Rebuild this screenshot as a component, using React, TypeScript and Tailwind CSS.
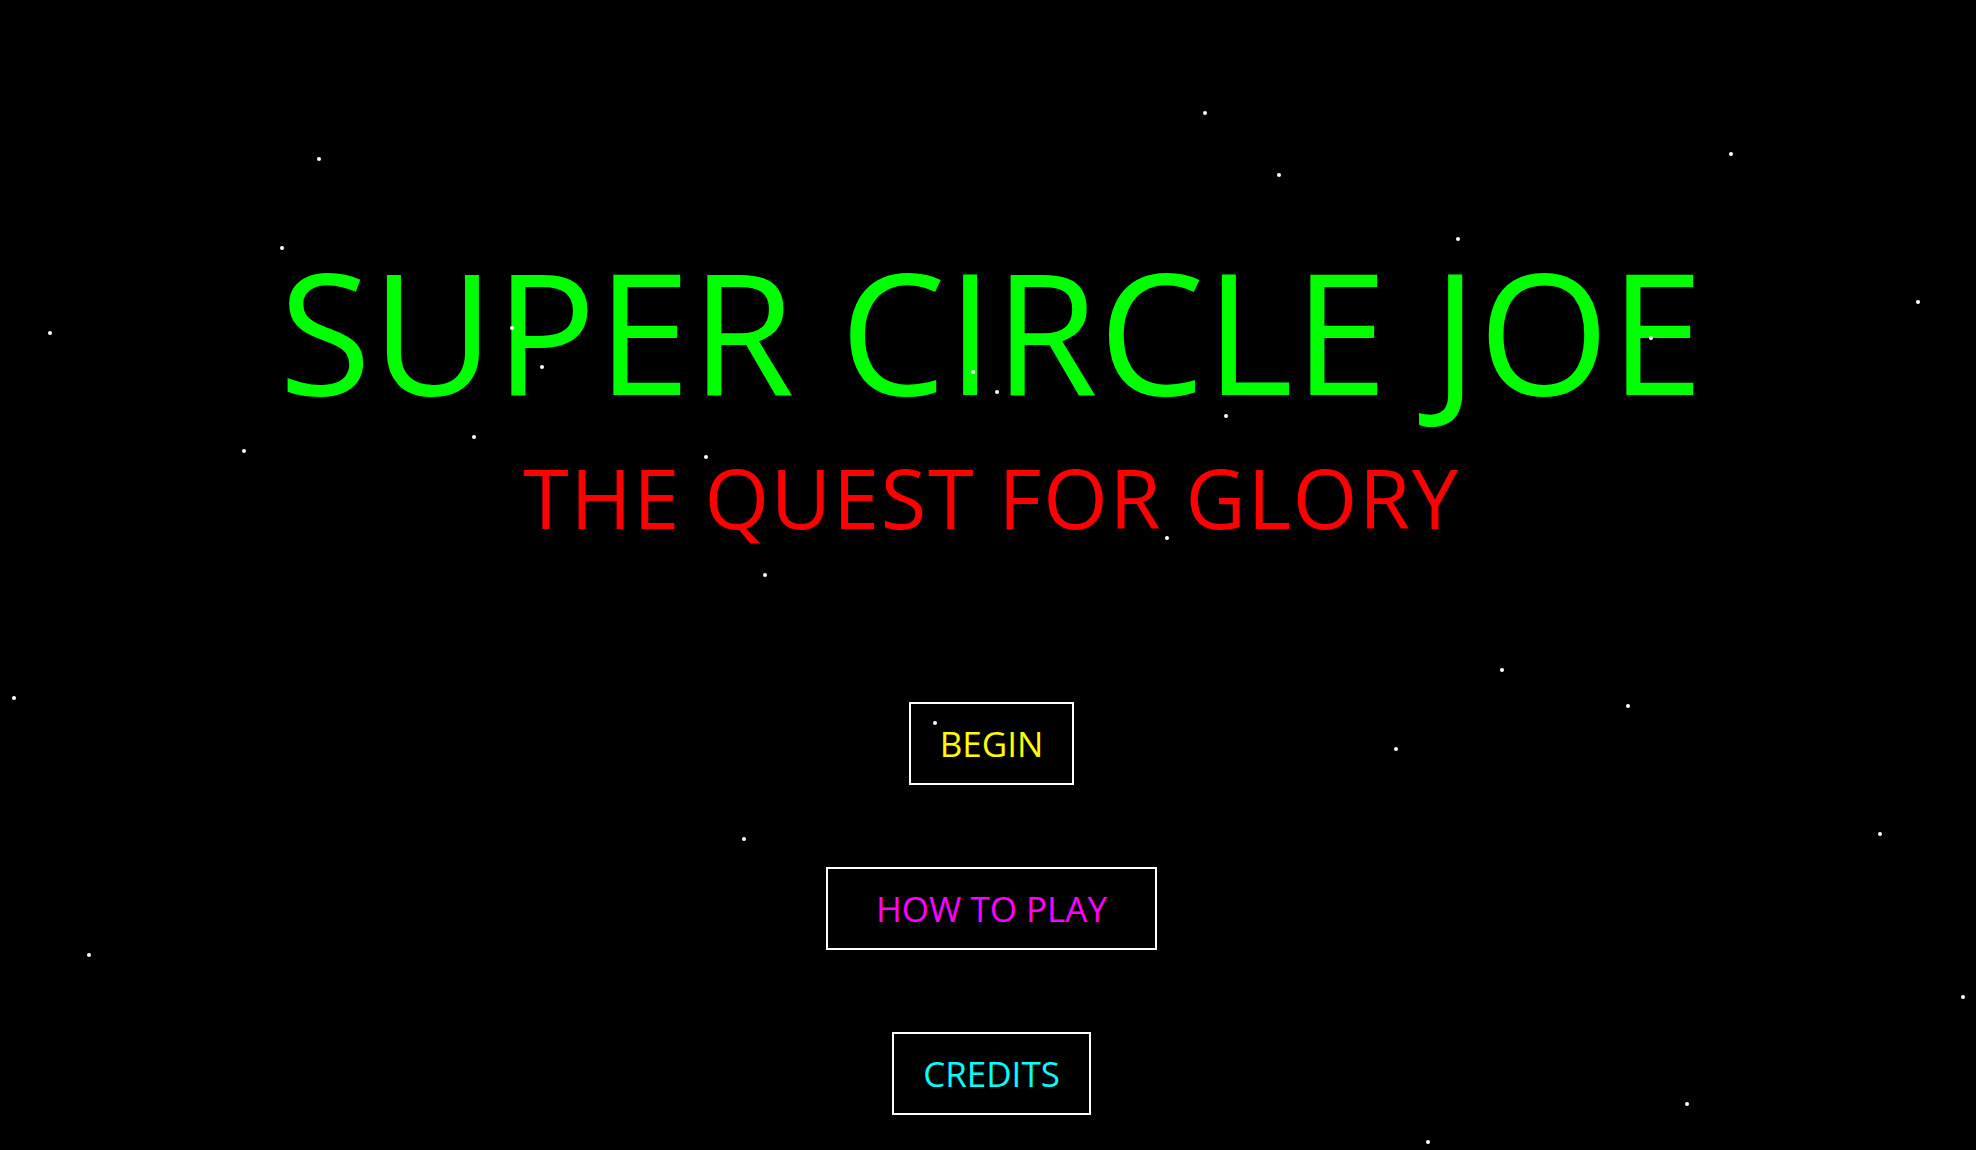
const stars = [
  'left-[317px] top-[157px]',
  'left-[1203px] top-[111px]',
  'left-[1277px] top-[173px]',
  'left-[1729px] top-[152px]',
  'left-[280px] top-[246px]',
  'left-[1456px] top-[237px]',
  'left-[48px] top-[331px]',
  'left-[1916px] top-[300px]',
  'left-[510px] top-[326px]',
  'left-[540px] top-[365px]',
  'left-[1649px] top-[336px]',
  'left-[971px] top-[370px]',
  'left-[995px] top-[390px]',
  'left-[1224px] top-[414px]',
  'left-[242px] top-[449px]',
  'left-[472px] top-[435px]',
  'left-[704px] top-[455px]',
  'left-[1165px] top-[536px]',
  'left-[763px] top-[573px]',
  'left-[12px] top-[696px]',
  'left-[1500px] top-[668px]',
  'left-[1626px] top-[704px]',
  'left-[933px] top-[721px]',
  'left-[1394px] top-[747px]',
  'left-[742px] top-[837px]',
  'left-[1878px] top-[832px]',
  'left-[87px] top-[953px]',
  'left-[1961px] top-[995px]',
  'left-[1685px] top-[1102px]',
  'left-[1426px] top-[1140px]',
];

const buttons = [
  { label: 'BEGIN', className: 'w-[165px] text-[#ffff00]' },
  { label: 'HOW TO PLAY', className: 'w-[331px] text-[#ff00ff]' },
  { label: 'CREDITS', className: 'w-[199px] text-[#00ffff]' },
];

const App = () => {
  return (
    <div className="relative h-[1150px] w-full overflow-hidden bg-black font-['Open_Sans',sans-serif]">
      {stars.map((pos) => (
        <span key={pos} className={`absolute h-[4px] w-[4px] rounded-full bg-white ${pos}`} />
      ))}

      <div className="flex flex-col items-center pl-[7px] pt-[246px]">
        <h1 className="text-[168px] leading-none tracking-[0.8px] text-[#00ff00] whitespace-nowrap">
          SUPER CIRCLE JOE
        </h1>
        <h2 className="mt-[41px] text-[83px] leading-none tracking-[1.7px] text-[#ff0000] whitespace-nowrap">
          THE QUEST FOR GLORY
        </h2>

        <div className="mt-[164px] flex flex-col items-center gap-[82px]">
          {buttons.map((b) => (
            <button
              key={b.label}
              className={`h-[83px] border-2 border-white bg-transparent text-[35px] leading-none ${b.className}`}
            >
              {b.label}
            </button>
          ))}
        </div>
      </div>
    </div>
  );
};

export default App;
